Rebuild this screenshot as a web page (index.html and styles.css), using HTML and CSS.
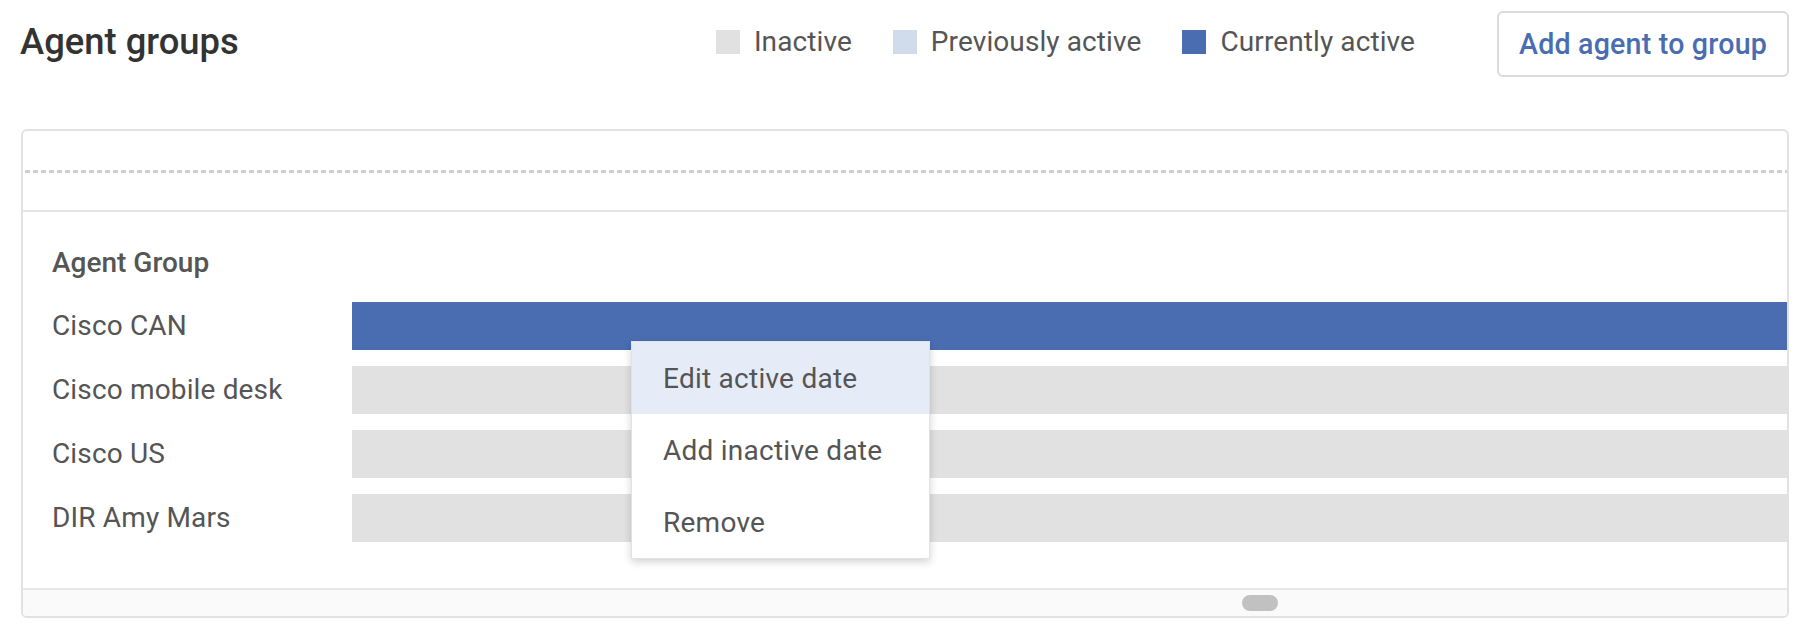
FILE: index.html
```html
<!DOCTYPE html>
<html lang="en">
<head>
<meta charset="utf-8">
<title>Agent groups</title>
<link rel="stylesheet" href="styles.css">
</head>
<body>
  <header class="header">
    <h1 class="title">Agent groups</h1>
    <ul class="legend">
      <li class="legend-item"><span class="swatch swatch-inactive"></span>Inactive</li>
      <li class="legend-item"><span class="swatch swatch-previous"></span>Previously active</li>
      <li class="legend-item"><span class="swatch swatch-current"></span>Currently active</li>
    </ul>
    <button class="btn" type="button">Add agent to group</button>
  </header>

  <section class="card">
    <div class="timeline-head">
      <div class="dashed"></div>
    </div>
    <div class="groups">
      <div class="groups-title">Agent Group</div>
      <div class="rows">
        <div class="row">
          <div class="label">Cisco CAN</div>
          <div class="bar bar-current"></div>
        </div>
        <div class="row">
          <div class="label">Cisco mobile desk</div>
          <div class="bar bar-inactive"></div>
        </div>
        <div class="row">
          <div class="label">Cisco US</div>
          <div class="bar bar-inactive"></div>
        </div>
        <div class="row">
          <div class="label">DIR Amy Mars</div>
          <div class="bar bar-inactive"></div>
        </div>
      </div>
    </div>
    <div class="hscroll">
      <div class="thumb" style="margin-left: 69.1%"></div>
    </div>
  </section>

  <ul class="menu">
    <li class="menu-item is-hover">Edit active date</li>
    <li class="menu-item">Add inactive date</li>
    <li class="menu-item">Remove</li>
  </ul>
</body>
</html>
```

FILE: styles.css
```css
* { box-sizing: border-box; }

html, body {
  margin: 0;
  padding: 0;
  background: #ffffff;
}

body {
  font-family: Roboto, "Liberation Sans", Arial, sans-serif;
  color: #555555;
  width: 1812px;
  height: 636px;
  overflow: hidden;
  position: relative;
}

.header {
  display: flex;
  align-items: center;
  height: 66px;
  margin-top: 11px;
  padding: 0 23px 0 20px;
}

.title {
  flex: 1;
  margin: 0 0 4px 0;
  font-size: 36.4px;
  font-weight: 500;
  color: #333333;
  line-height: 40px;
}

.legend {
  display: flex;
  gap: 41px;
  list-style: none;
  margin: 0 0 5px 0;
  padding: 0;
}

.legend-item {
  display: flex;
  align-items: center;
  gap: 14px;
  font-size: 28px;
  line-height: 32px;
  color: #555555;
  letter-spacing: 0.1px;
}

.swatch {
  width: 24px;
  height: 24px;
  display: inline-block;
}
.swatch-inactive { background: #e1e1e1; }
.swatch-previous { background: #d0dbec; }
.swatch-current { background: #4a6db2; }

.btn {
  margin-left: 82px;
  width: 292px;
  height: 66px;
  border: 2px solid #dadada;
  border-radius: 6px;
  background: #ffffff;
  color: #4a6db2;
  font-family: Roboto, "Liberation Sans", Arial, sans-serif;
  font-size: 28.6px;
  font-weight: 500;
  letter-spacing: 0.2px;
  padding: 0;
}

.card {
  margin: 52px 23px 0 21px;
  height: 489px;
  border: 2px solid #e2e2e2;
  border-radius: 6px;
  display: flex;
  flex-direction: column;
  overflow: hidden;
}

.timeline-head {
  height: 81px;
  padding-top: 39px;
  border-bottom: 2px solid #e4e4e4;
}

.dashed {
  height: 3px;
  margin-left: 2px;
  background: repeating-linear-gradient(to right, #cfcfcf 0 5px, transparent 5px 8px);
}

.groups {
  flex: 1;
  padding: 35px 0 0 29px;
}

.groups-title {
  font-size: 28px;
  font-weight: 500;
  line-height: 32px;
  color: #555555;
  margin-bottom: 23px;
}

.rows {
  display: flex;
  flex-direction: column;
  gap: 16px;
}

.row {
  display: grid;
  grid-template-columns: 300px 1fr;
  align-items: center;
  height: 48px;
}

.label {
  font-size: 28px;
  line-height: 32px;
  color: #555555;
  letter-spacing: 0.15px;
  white-space: nowrap;
}

.bar {
  height: 48px;
}
.bar-current { background: #4a6db2; }
.bar-inactive { background: #e1e1e1; }

.hscroll {
  height: 28px;
  border-top: 2px solid #e6e6e6;
  background: #fafafa;
  display: flex;
  align-items: center;
}

.thumb {
  width: 36px;
  height: 16px;
  border-radius: 8px;
  background: #c1c1c1;
}

.menu {
  position: absolute;
  left: 631px;
  top: 341px;
  width: 299px;
  margin: 0;
  padding: 0;
  list-style: none;
  background: #ffffff;
  border: 1px solid #e2e2e2;
  box-shadow: 0 3px 8px rgba(0, 0, 0, 0.18);
}

.menu-item {
  height: 72px;
  display: flex;
  align-items: center;
  padding-left: 31px;
  font-size: 28px;
  color: #555555;
  letter-spacing: 0.25px;
}

.menu-item.is-hover {
  background: #e5ecf8;
}
```
